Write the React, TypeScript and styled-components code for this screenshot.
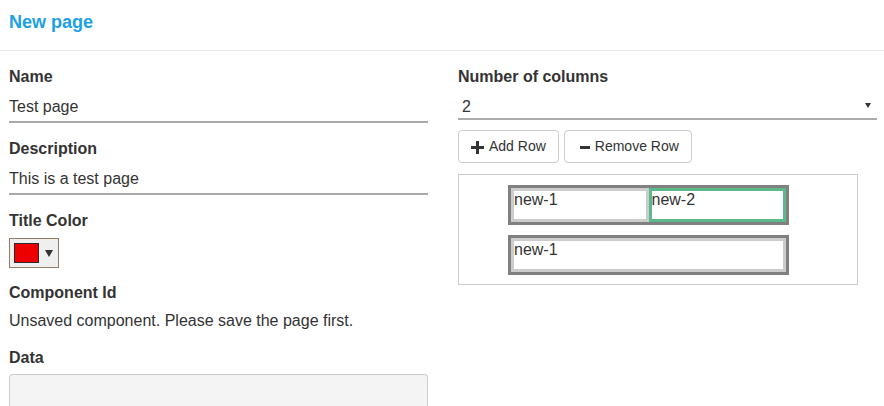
import React from "react";
import styled, { createGlobalStyle } from "styled-components";

const GlobalStyle = createGlobalStyle`
  html, body {
    margin: 0;
    padding: 0;
    background: #ffffff;
    font-family: "Liberation Sans", Arial, sans-serif;
    color: #333333;
  }
  * { box-sizing: border-box; }
`;

const Header = styled.header`
  height: 51px;
  padding: 12px 9px 0;
  border-bottom: 1px solid #e5e5e5;
`;

const Title = styled.h1`
  margin: 0;
  font-size: 18px;
  line-height: 20px;
  font-weight: 700;
  color: #1ba1e2;
`;

const Main = styled.main`
  display: grid;
  grid-template-columns: 419px 419px;
  column-gap: 30px;
  padding: 16px 9px 0;
  align-items: start;
`;

const Column = styled.section`
  display: flex;
  flex-direction: column;
`;

const Label = styled.div`
  font-size: 16px;
  font-weight: 700;
  line-height: 20px;
  color: #333;
`;

const TextInput = styled.div`
  font-size: 16px;
  line-height: 20px;
  padding: 10px 0 4px;
  border-bottom: 2px solid #aaaaaa;
  margin-bottom: 16px;
`;

const ColorButton = styled.div`
  display: flex;
  align-items: center;
  gap: 6px;
  width: 50px;
  height: 30px;
  margin: 7px 0 15px;
  padding-left: 4px;
  border: 1px solid #937a62;
  background: #efefef;
`;

const Swatch = styled.div<{ $color: string }>`
  width: 25px;
  height: 20px;
  border: 1px solid #2a2a2a;
  background: ${(p) => p.$color};
`;

const ValueText = styled.div`
  font-size: 16px;
  line-height: 20px;
  padding-top: 8px;
  margin-bottom: 17px;
`;

const DataBox = styled.div`
  margin-top: 6px;
  height: 33px;
  background: #f4f4f4;
  border: 1px solid #cccccc;
  border-bottom: none;
  border-radius: 4px 4px 0 0;
`;

const Select = styled.div`
  display: flex;
  justify-content: space-between;
  align-items: center;
  font-size: 16px;
  line-height: 20px;
  padding: 10px 6px 1px 4px;
  border-bottom: 2px solid #aaaaaa;
`;

const SelectArrow = styled.svg`
  margin-bottom: 3px;
`;

const ButtonRow = styled.div`
  display: flex;
  gap: 5px;
  margin-top: 10px;
`;

const Button = styled.button`
  display: inline-flex;
  align-items: center;
  height: 33px;
  padding: 0 12px;
  border: 1px solid #cccccc;
  border-radius: 4px;
  background: #ffffff;
  color: #333;
  font-family: "Liberation Sans", Arial, sans-serif;
  font-size: 14px;
  line-height: 19px;
`;

const ButtonIcon = styled.svg`
  margin-right: 4px;
  margin-top: 2px;
  flex: none;
`;

const GridBox = styled.div`
  margin-top: 11px;
  width: 400px;
  border: 1px solid #cccccc;
  padding: 10px 0 9px 49px;
  display: flex;
  flex-direction: column;
  gap: 10px;
`;

const GridRow = styled.div`
  display: flex;
  width: 281px;
  border: 3px solid #808080;
`;

const Cell = styled.div<{ $active?: boolean }>`
  flex: 1;
  min-height: 34px;
  border: 3px solid ${(p) => (p.$active ? "#5bb98b" : "#cccccc")};
  font-size: 16px;
  line-height: normal;
  color: #333;
`;

const Triangle = () => (
  <svg width="8" height="7" viewBox="0 0 8 7">
    <polygon points="0,0 8,0 4,7" fill="#333" />
  </svg>
);

const PlusIcon = () => (
  <ButtonIcon width="14" height="14" viewBox="0 0 14 14">
    <rect x="0" y="5" width="13" height="3" fill="#333" />
    <rect x="5" y="0" width="3" height="13" fill="#333" />
  </ButtonIcon>
);

const MinusIcon = () => (
  <ButtonIcon width="14" height="14" viewBox="0 0 14 14">
    <rect x="3" y="5" width="10" height="3" fill="#333" />
  </ButtonIcon>
);

const rows: { id: string; active?: boolean }[][] = [
  [{ id: "new-1" }, { id: "new-2", active: true }],
  [{ id: "new-1" }],
];

export default function App() {
  return (
    <>
      <GlobalStyle />
      <Header>
        <Title>New page</Title>
      </Header>
      <Main>
        <Column>
          <Label>Name</Label>
          <TextInput>Test page</TextInput>
          <Label>Description</Label>
          <TextInput>This is a test page</TextInput>
          <Label>Title Color</Label>
          <ColorButton>
            <Swatch $color="#ee0000" />
            <Triangle />
          </ColorButton>
          <Label>Component Id</Label>
          <ValueText>Unsaved component. Please save the page first.</ValueText>
          <Label>Data</Label>
          <DataBox />
        </Column>
        <Column>
          <Label>Number of columns</Label>
          <Select>
            <span>2</span>
            <SelectArrow width="6" height="5" viewBox="0 0 6 5">
              <polygon points="0,0 6,0 3,5" fill="#333" />
            </SelectArrow>
          </Select>
          <ButtonRow>
            <Button>
              <PlusIcon />
              Add Row
            </Button>
            <Button>
              <MinusIcon />
              Remove Row
            </Button>
          </ButtonRow>
          <GridBox>
            {rows.map((row, i) => (
              <GridRow key={i}>
                {row.map((c, j) => (
                  <Cell key={j} $active={c.active}>
                    {c.id}
                  </Cell>
                ))}
              </GridRow>
            ))}
          </GridBox>
        </Column>
      </Main>
    </>
  );
}
